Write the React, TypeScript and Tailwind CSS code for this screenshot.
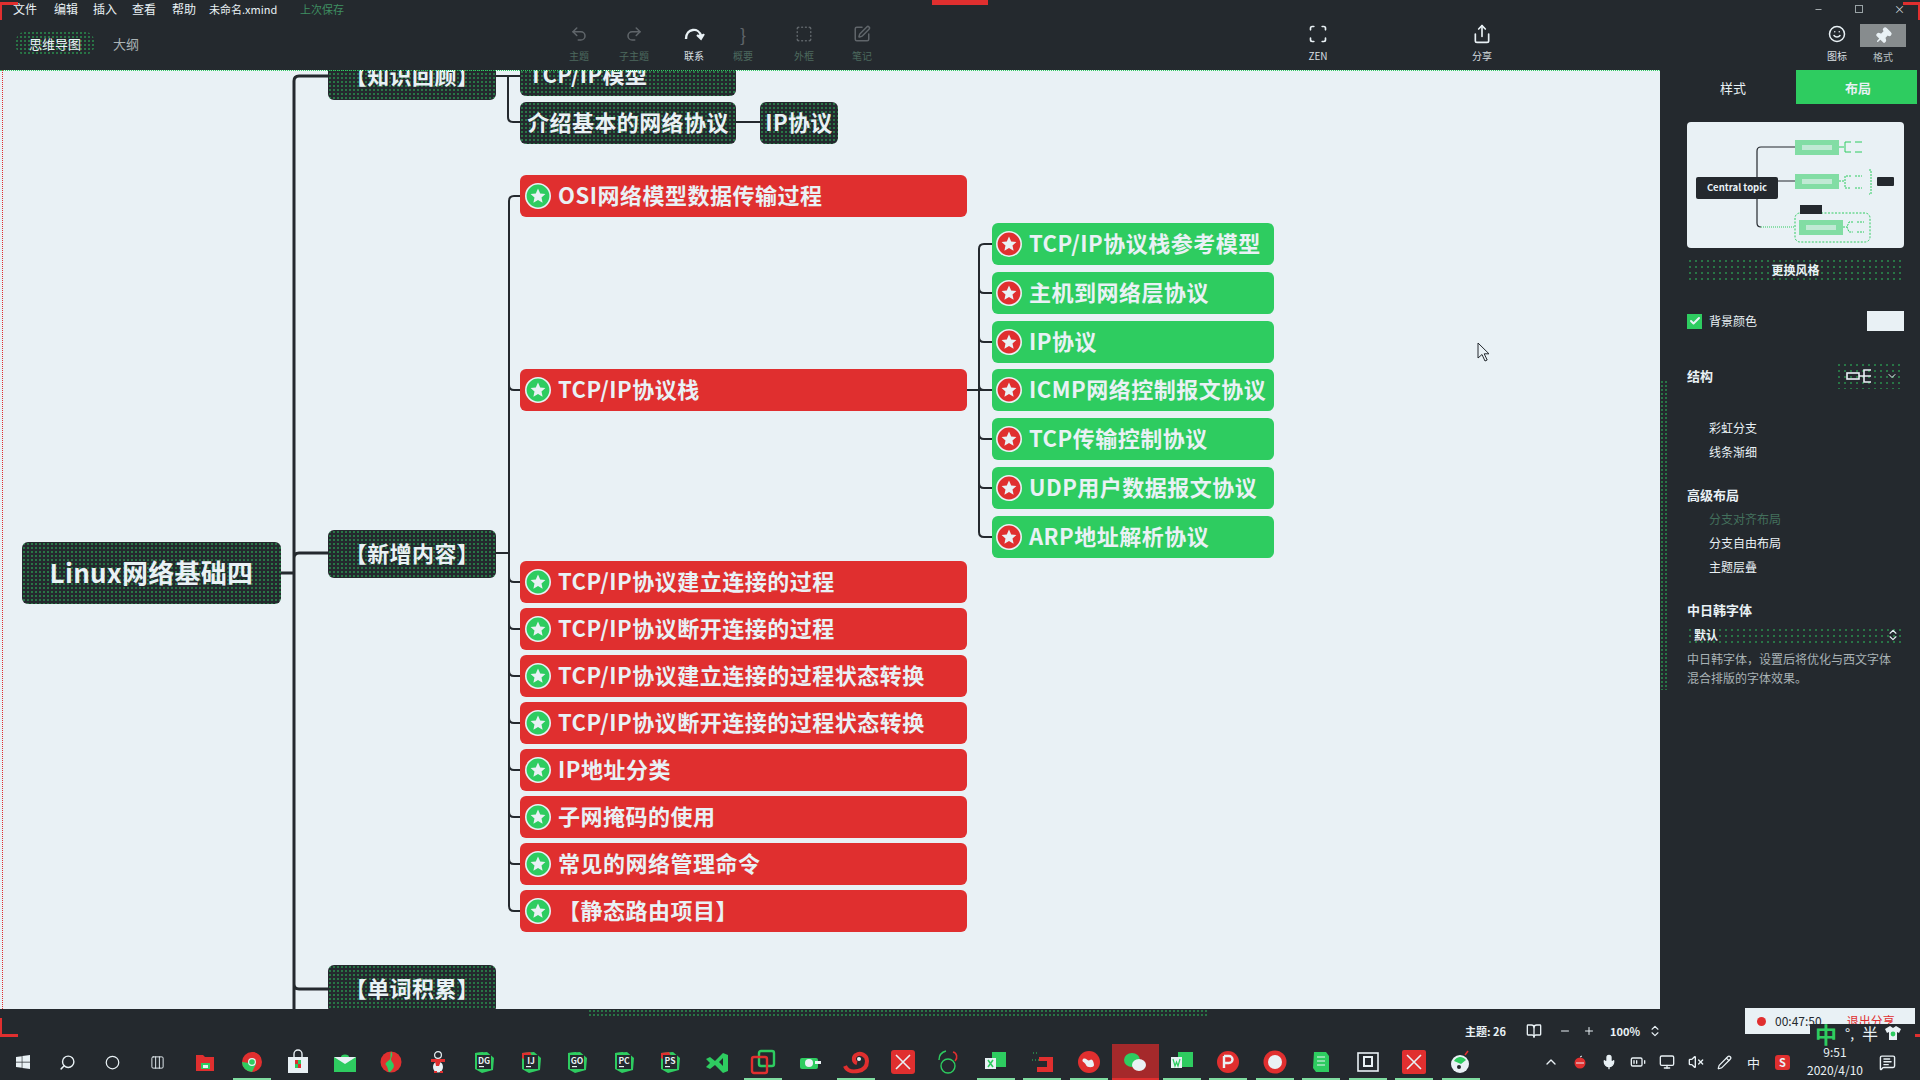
import React from "react";
import { Undo2, Redo2, Scan, Share, Smile, Pin, BookOpen, Minus, Plus, ChevronsUpDown, ChevronDown, Check, Search, Circle, Mic, BatteryMedium, Monitor, VolumeX, ChevronUp, MessageSquareText, SquareDashed, SquarePen, Pencil, Columns3 } from "lucide-react";
import { FaWindows } from "react-icons/fa";

const DOTS = "bg-[radial-gradient(circle,#2ecc60_0.6px,transparent_0.8px)] bg-[length:4px_4px]";
const FAINT_DOTS = "bg-[radial-gradient(circle,#2ecc60_0.6px,transparent_0.8px)] bg-[length:6px_6px]";

function Badge({ color }: { color: string }) {
  return (
    <svg width="26" height="26" viewBox="0 0 26 26" className="shrink-0">
      <circle cx="13" cy="13" r="12.2" fill={color} stroke="#e9f1f5" strokeWidth="1.6" />
      <path d="M13 5.6l2.2 4.8 5.2.6-3.9 3.5 1.1 5.2-4.6-2.7-4.6 2.7 1.1-5.2-3.9-3.5 5.2-.6z" fill="#e9f1f5" />
    </svg>
  );
}

const reds = [
  { t: "OSI网络模型数据传输过程", c: "top-[105px]" },
  { t: "TCP/IP协议栈", c: "top-[299px]" },
  { t: "TCP/IP协议建立连接的过程", c: "top-[491px]" },
  { t: "TCP/IP协议断开连接的过程", c: "top-[538px]" },
  { t: "TCP/IP协议建立连接的过程状态转换", c: "top-[585px]" },
  { t: "TCP/IP协议断开连接的过程状态转换", c: "top-[632px]" },
  { t: "IP地址分类", c: "top-[679px]" },
  { t: "子网掩码的使用", c: "top-[726px]" },
  { t: "常见的网络管理命令", c: "top-[773px]" },
  { t: "【静态路由项目】", c: "top-[820px]" },
];
const greens = [
  { t: "TCP/IP协议栈参考模型", c: "top-[153px]" },
  { t: "主机到网络层协议", c: "top-[202px]" },
  { t: "IP协议", c: "top-[251px]" },
  { t: "ICMP网络控制报文协议", c: "top-[299px]" },
  { t: "TCP传输控制协议", c: "top-[348px]" },
  { t: "UDP用户数据报文协议", c: "top-[397px]" },
  { t: "ARP地址解析协议", c: "top-[446px]" },
];
const darks = [
  { t: "【知识回顾】", c: "left-[328px] top-[-18px] w-[168px] h-[48px] justify-center" },
  { t: "【新增内容】", c: "left-[328px] top-[460px] w-[168px] h-[48px] justify-center" },
  { t: "【单词积累】", c: "left-[328px] top-[895px] w-[168px] h-[48px] justify-center" },
  { t: "TCP/IP模型", c: "left-[520px] top-[-16px] w-[216px] h-[42px] pl-[9px]" },
  { t: "介绍基本的网络协议", c: "left-[520px] top-[32px] w-[216px] h-[42px] justify-center" },
  { t: "IP协议", c: "left-[760px] top-[32px] w-[78px] h-[42px] justify-center" },
];

const redCenters = [320, 512, 559, 606, 653, 700, 747, 794];
const greenCenters = [223, 272, 320, 369, 418];

function Connectors() {
  return (
    <svg className="absolute left-0 top-0 w-[1660px] h-[940px]" viewBox="0 0 1660 940" fill="none" stroke="#24292e">
      <g strokeWidth="3">
        <path d="M281 503H294M328 6H299Q294 6 294 11V940M328 483H299Q294 483 294 488M294 914Q294 919 299 919H328" />
      </g>
      <g strokeWidth="2">
        <path d="M496 483H509M520 126H514Q509 126 509 131V836Q509 841 514 841H520" />
        {redCenters.map((y) => (
          <path key={y} d={`M509 ${y - 5}Q509 ${y} 514 ${y}H520`} />
        ))}
        <path d="M496 6H520M508 6V47Q508 52 513 52H520M736 52H760" />
        <path d="M967 320H992M992 174H984Q979 174 979 179V462Q979 467 984 467H992" />
        {greenCenters.map((y) => (
          <path key={y} d={`M979 ${y - 5}Q979 ${y} 984 ${y}H992`} />
        ))}
      </g>
    </svg>
  );
}

function Canvas() {
  return (
    <div className="relative w-[1660px] h-[939px] bg-[#e9f1f5] overflow-hidden">
      <Connectors />
      <div className={`absolute left-[22px] top-[472px] w-[259px] h-[62px] pb-[4px] rounded-[6px] bg-[#24292e] ${DOTS} flex items-center justify-center text-[26px] font-bold tracking-[0.3px] text-[#e9f1f5]`}>Linux网络基础四</div>
      {darks.map((d) => (
        <div key={d.t} className={`absolute ${d.c} pb-[3px] rounded-[6px] bg-[#24292e] ${DOTS} flex items-center text-[22px] font-bold tracking-[0.4px] text-[#e9f1f5] whitespace-nowrap`}>{d.t}</div>
      ))}
      {reds.map((d) => (
        <div key={d.t} className={`absolute left-[520px] ${d.c} w-[447px] h-[42px] rounded-[6px] bg-[#e02f2f] flex items-center gap-[7px] pl-[5px] text-[22px] font-bold tracking-[0.5px] text-[#e9f1f5] whitespace-nowrap`}>
          <Badge color="#2ecc60" />
          <span className="pb-[3px]">{d.t}</span>
        </div>
      ))}
      {greens.map((d) => (
        <div key={d.t} className={`absolute left-[992px] ${d.c} w-[282px] h-[42px] rounded-[6px] bg-[#2ecc60] flex items-center gap-[7px] pl-[4px] text-[22px] font-bold tracking-[0.5px] text-[#e9f1f5] whitespace-nowrap`}>
          <Badge color="#e02f2f" />
          <span className="pb-[3px]">{d.t}</span>
        </div>
      ))}
      <svg className="absolute left-[1476px] top-[272px] w-[16px] h-[22px]" viewBox="0 0 16 22">
        <path d="M2 1v15l4-3.5 3 6.5 2.2-1-3-6.2H13z" fill="#e9f1f5" stroke="#24292e" strokeWidth="1" />
      </svg>
      <div className="absolute left-[2px] top-0 h-full border-l border-dotted border-[#e02f2f]" />
      <div className="absolute left-0 top-0 w-full border-t border-dotted border-[#2ecc60]" />
    </div>
  );
}

function ArcIcon() {
  return (
    <svg width="22" height="22" viewBox="0 0 22 22" fill="none" stroke="#e9f1f5" strokeWidth="2.4">
      <path d="M3 16C3 5 16 4 18 13" />
      <path d="M14 12l4 4 3-5" strokeWidth="2" fill="#e9f1f5" />
    </svg>
  );
}

function Tool({ icon, label, className = "", dim = false }: { icon: React.ReactNode; label: string; className?: string; dim?: boolean }) {
  return (
    <div className={`w-[40px] shrink-0 flex flex-col items-center pt-[2px] ${className}`}>
      <div className={`h-[23px] flex items-center justify-center ${dim ? "opacity-30" : ""}`}>{icon}</div>
      <div className={`mt-[4px] text-[10px] leading-[14px] whitespace-nowrap ${dim ? "text-[#4d6a5e]" : "text-[#d7dfe0]"}`}>{label}</div>
    </div>
  );
}

function Header() {
  const ic = "w-[18px] h-[18px] text-[#e9f1f5]";
  return (
    <div className="h-[70px] shrink-0 bg-[#24292e] flex flex-col text-[#e9f1f5]">
      <div className="h-[20px] pb-[2px] flex items-center pl-[13px] text-[12px] leading-none">
        <span className="w-[41px]">文件</span>
        <span className="w-[39px]">编辑</span>
        <span className="w-[39px]">插入</span>
        <span className="w-[40px]">查看</span>
        <span className="w-[37px]">帮助</span>
        <span className="w-[91px] text-[11px]">未命名.xmind</span>
        <span className="text-[11px] text-[#3f8f62]">上次保存</span>
        <div className="ml-auto flex items-center text-[#cfd6d8]">
          <Minus className="w-[9px] h-[9px] mr-[32px]" />
          <span className="mr-[31px] w-[8px] h-[8px] border border-[#9aa3a6]" />
          <span className="mr-[15px] text-[11px]">×</span>
        </div>
      </div>
      <div className="h-[50px] flex items-start">
        <div className="w-[559px] shrink-0 flex items-center pl-[15px] pt-[11px]">
          <div className={`w-[80px] h-[25px] rounded-full bg-[#24292e] ${DOTS} flex items-center justify-center text-[13px]`}>思维导图</div>
          <span className="ml-[18px] text-[13px] text-[#aab3b5]">大纲</span>
        </div>
        <Tool dim icon={<Undo2 className={ic} />} label="主题" />
        <Tool dim icon={<Redo2 className={ic} />} label="子主题" className="ml-[15px]" />
        <Tool icon={<ArcIcon />} label="联系" className="ml-[20px]" />
        <Tool dim icon={<span className="text-[18px] leading-none">{"}"}</span>} label="概要" className="ml-[9px]" />
        <Tool dim icon={<SquareDashed className={ic} />} label="外框" className="ml-[21px]" />
        <Tool dim icon={<SquarePen className={ic} />} label="笔记" className="ml-[18px]" />
        <Tool icon={<Scan className="w-[20px] h-[20px] text-[#e9f1f5]" />} label="ZEN" className="ml-[416px]" />
        <Tool icon={<Share className="w-[20px] h-[20px] text-[#e9f1f5]" />} label="分享" className="ml-[124px]" />
        <Tool icon={<Smile className={ic} />} label="图标" className="ml-[315px]" />
        <div className="w-[46px] ml-[3px] shrink-0 flex flex-col items-center pt-[4px]">
          <div className="w-[46px] h-[23px] bg-[#878c8e] flex items-center justify-center">
            <Pin className="w-[18px] h-[18px] text-[#e9f1f5] fill-[#e9f1f5] rotate-45" />
          </div>
          <div className="mt-[3px] text-[10px] leading-[14px] text-[#b7c0c2]">格式</div>
        </div>
      </div>
    </div>
  );
}

function Preview() {
  return (
    <svg viewBox="0 0 217 126" className="w-[217px] h-[126px] rounded-[4px] bg-[#e9f1f5]" fill="none">
      <path d="M91 59H108M108 25H74Q70 25 70 29V101Q70 105 74 105" stroke="#24292e" strokeWidth="1.2" />
      <path d="M74 105H108" stroke="#2ecc60" strokeWidth="1.2" strokeDasharray="1 1" />
      <rect x="9" y="55" width="82" height="22" rx="2" fill="#24292e" />
      <text x="50" y="69" textAnchor="middle" fontSize="9.5" fontWeight="700" fill="#e9f1f5">Central topic</text>
      <rect x="108" y="18" width="44" height="15" fill="#2ecc60" fillOpacity="0.55" />
      <rect x="115" y="23" width="30" height="5" fill="#e9f1f5" fillOpacity="0.6" />
      <path d="M152 25H157M164 20H158V30H164M168 20h7M168 30h7" stroke="#2ecc60" />
      <rect x="108" y="52" width="44" height="15" fill="#2ecc60" fillOpacity="0.55" />
      <rect x="115" y="57" width="30" height="5" fill="#e9f1f5" fillOpacity="0.6" />
      <path d="M152 59H157M164 54H158V66H164M168 54h7M168 66h7M182 48h2V72h-2" stroke="#2ecc60" strokeDasharray="2 1" />
      <rect x="190" y="55" width="17" height="9" rx="1" fill="#24292e" />
      <rect x="108" y="91" width="75" height="29" rx="5" stroke="#2ecc60" strokeDasharray="2 1.5" />
      <rect x="113" y="83" width="22" height="9" fill="#24292e" />
      <rect x="112" y="98" width="44" height="15" fill="#2ecc60" fillOpacity="0.55" />
      <rect x="119" y="103" width="30" height="5" fill="#e9f1f5" fillOpacity="0.6" />
      <path d="M156 105h4M166 100h-4l-2 5 2 5h4M170 100h7M170 110h7" stroke="#2ecc60" strokeDasharray="2 1" />
    </svg>
  );
}

function Sidebar() {
  return (
    <div className="relative w-[260px] h-[939px] bg-[#24292e] text-[#e9f1f5] text-[12px] leading-none">
      <div className="flex h-[34px]">
        <div className="w-[136px] flex items-center justify-center pl-[10px] text-[13px]">样式</div>
        <div className="w-[121px] flex items-center justify-center pl-[3px] bg-[#2ecc60] text-[13px] font-bold">布局</div>
      </div>
      <div className="pl-[27px] pr-[16px]">
        <div className="mt-[18px]"><Preview /></div>
        <div className={`mt-[10px] h-[23px] ${FAINT_DOTS} flex items-center justify-center font-bold`}>更换风格</div>
        <div className="mt-[30px] h-[20px] flex items-center">
          <div className="w-[15px] h-[15px] bg-[#2ecc60] flex items-center justify-center">
            <Check className="w-[12px] h-[12px] text-[#e9f1f5]" strokeWidth={4} />
          </div>
          <span className="ml-[7px]">背景颜色</span>
          <div className="ml-auto w-[37px] h-[20px] bg-[#e9f1f5]" />
        </div>
        <div className="mt-[31px] h-[27px] flex items-center">
          <span className="text-[13px] font-bold">结构</span>
          <div className={`ml-auto w-[68px] h-[27px] ${FAINT_DOTS} flex items-center pl-[10px]`}>
            <svg width="26" height="16" viewBox="0 0 26 16" fill="none" stroke="#e9f1f5" strokeWidth="1.6">
              <rect x="1" y="5" width="12" height="6" />
              <path d="M13 8H18M25 2H18V14H25M18 8H25" />
            </svg>
            <ChevronDown className="ml-[14px] w-[12px] h-[12px]" />
          </div>
        </div>
        <div className="mt-[27px] pl-[22px]">
          <div className="h-[24px] flex items-center">彩虹分支</div>
          <div className="h-[24px] flex items-center">线条渐细</div>
        </div>
        <div className="mt-[20px] h-[20px] flex items-center text-[13px] font-bold">高级布局</div>
        <div className="mt-[3px] pl-[22px]">
          <div className="h-[24px] flex items-center text-[#43705c]">分支对齐布局</div>
          <div className="h-[24px] flex items-center">分支自由布局</div>
          <div className="h-[24px] flex items-center">主题层叠</div>
        </div>
        <div className="mt-[20px] h-[20px] flex items-center text-[13px] font-bold">中日韩字体</div>
        <div className={`mt-[8px] h-[16px] ${FAINT_DOTS} flex items-center justify-between pl-[7px] pr-[4px]`}>
          <span className="font-bold">默认</span>
          <ChevronsUpDown className="w-[14px] h-[14px]" />
        </div>
        <div className="mt-[6px] leading-[19px] text-[#a9b3b6] whitespace-nowrap">
          中日韩字体，设置后将优化与西文字体
          <br />
          混合排版的字体效果。
        </div>
      </div>
      <div className={`absolute left-0 top-[310px] w-[9px] h-[310px] ${DOTS}`} />
    </div>
  );
}

function StatusBar() {
  return (
    <div className="relative h-[35px] shrink-0 bg-[#24292e] flex text-[#e9f1f5]">
      <div className={`ml-[588px] w-[619px] h-[9px] ${DOTS}`} />
      <div className="ml-[258px] flex items-center h-[35px] pt-[9px] text-[11px] leading-none">
        <span className="w-[61px] whitespace-nowrap font-bold">主题: 26</span>
        <BookOpen className="w-[16px] h-[16px]" />
        <Minus className="ml-[17px] w-[12px] h-[12px]" />
        <Plus className="ml-[12px] w-[12px] h-[12px]" />
        <span className="ml-[15px] w-[38px] font-bold">100%</span>
        <ChevronsUpDown className="w-[14px] h-[14px]" />
      </div>
      <div className="absolute left-[1745px] top-[-1px] w-[170px] h-[26px] bg-[#e9f1f5] flex items-center text-[#24292e] text-[12px] leading-none">
        <span className="ml-[12px] w-[9px] h-[9px] rounded-full bg-[#e02f2f]" />
        <span className="ml-[9px] whitespace-nowrap">00:47:50</span>
        <span className="ml-[25px] text-[#e02f2f] whitespace-nowrap">退出分享</span>
      </div>
      <div className="absolute left-[1810px] top-[15px] w-[105px] h-[17px] bg-[#24292e] flex items-center leading-none">
        <span className="ml-[5px] text-[22px] text-[#2ecc60] font-bold">中</span>
        <span className="ml-[8px] text-[14px]">°,</span>
        <span className="ml-[8px] text-[16px]">半</span>
        <svg className="ml-[6px]" width="18" height="16" viewBox="0 0 18 16"><path d="M1 4l5-3 3 2 3-2 5 3-2 4-2-1v8H5V7L3 8z" fill="#e9f1f5" /><circle cx="9" cy="9" r="2.4" fill="#2ecc60" /></svg>
      </div>
    </div>
  );
}

const R = "#e02f2f";
const G = "#2ecc60";
const W = "#e9f1f5";
const D = "#24292e";

function IdeIcon({ label, c1, c2 }: { label: string; c1: string; c2: string }) {
  return (
    <svg width="24" height="24" viewBox="0 0 24 24">
      <path d="M3 3l12-1 7 6-1 12-11 3-7-4z" fill={c1} />
      <path d="M3 3l8-1 2 4-7 4-3-2z" fill={c2} />
      <rect x="5" y="5" width="14" height="14" fill={D} />
      <text x="12" y="13.5" textAnchor="middle" fontSize="8.5" fontWeight="700" fill={W}>{label}</text>
      <rect x="7" y="16" width="5" height="1.2" fill={W} />
    </svg>
  );
}

function Box({ children }: { children: React.ReactNode }) {
  return <svg width="26" height="26" viewBox="0 0 26 26">{children}</svg>;
}

const apps: { icon: React.ReactNode; on?: boolean; active?: boolean }[] = [
  { icon: <Box><path d="M4 6h7l2 2h9v14H4z" fill={R} /><rect x="9" y="14" width="9" height="6" fill={G} /><rect x="11" y="16" width="5" height="3" fill={W} /></Box> },
  { on: true, icon: <Box><circle cx="13" cy="13" r="10" fill={R} /><path d="M3 13a10 10 0 0 0 10 10l4-8z" fill={G} /><path d="M13 3a10 10 0 0 1 9 6h-9z" fill={R} /><circle cx="13" cy="13" r="4" fill={W} /><circle cx="13" cy="13" r="2.8" fill={G} /></Box> },
  { icon: <Box><rect x="3" y="8" width="20" height="16" fill={W} /><path d="M9 8V5a4 4 0 0 1 8 0v3" fill="none" stroke={W} strokeWidth="1.4" /><rect x="10" y="11" width="3" height="4" fill={R} /><rect x="13" y="11" width="3" height="4" fill={G} /><rect x="10" y="15" width="3" height="4" fill={G} /><rect x="13" y="15" width="3" height="4" fill={R} /></Box> },
  { icon: <Box><path d="M2 8h22v15H2z" fill={G} /><path d="M2 8h22l-11 7z" fill={W} /><path d="M9 8a4 2.5 0 0 1 8 0z" fill={G} /></Box> },
  { icon: <Box><circle cx="13" cy="13" r="10.5" fill={R} /><path d="M13 2.5c3 3 0 6 0 8s5 5 2 9-3 3.5-4 3.5-1-5-3-7 3-4 4-6 0-5 1-7.500z" fill={G} /></Box> },
  { icon: <Box><circle cx="13" cy="6" r="3.4" fill="none" stroke={W} strokeWidth="1.2" /><rect x="6" y="10" width="14" height="3" fill={R} /><ellipse cx="13" cy="18" rx="5" ry="5.5" fill={W} /><path d="M10 12h6l-2 5h-3z" fill={R} /><rect x="9" y="22" width="3" height="2" fill={R} /><rect x="15" y="22" width="3" height="2" fill={R} /></Box> },
  { icon: <IdeIcon label="DG" c1={G} c2={G} /> },
  { icon: <IdeIcon label="IJ" c1={G} c2={R} /> },
  { icon: <IdeIcon label="GO" c1={G} c2={G} /> },
  { icon: <IdeIcon label="PC" c1={G} c2={G} /> },
  { icon: <IdeIcon label="PS" c1={G} c2={R} /> },
  { icon: <Box><path d="M2 10l4-2 5 4 8-8 5 2v16l-5 2-8-8-5 4-4-2 4-4z" fill={G} /><path d="M19 9l-4 4 4 4z" fill={D} /></Box> },
  { on: true, icon: <Box><rect x="9" y="2" width="15" height="15" rx="2" fill="none" stroke={G} strokeWidth="2.4" /><rect x="2" y="8" width="15" height="16" rx="2" fill="none" stroke={R} strokeWidth="2.4" /></Box> },
  { icon: <Box><rect x="3" y="9" width="18" height="11" rx="2" fill={G} /><circle cx="12" cy="14" r="4" fill={W} /><rect x="18" y="12" width="6" height="3" fill={W} /></Box> },
  { on: true, icon: <Box><path d="M2 17c2 5 8 6 13 5 6-1 9-5 9-10 0-6-7-9-11-6-3 2-3 7 1 8" fill="none" stroke={R} strokeWidth="4" /><circle cx="16" cy="10" r="2" fill={W} /></Box> },
  { icon: <Box><rect x="1" y="1" width="24" height="24" rx="3" fill={R} /><path d="M6 6l14 14M20 6L6 20" stroke={W} strokeWidth="1.6" /></Box> },
  { icon: <Box><circle cx="12" cy="17" r="7" fill="none" stroke={G} strokeWidth="1.4" /><path d="M10 2c-4 1-7 4-7 9" fill="none" stroke={G} strokeWidth="1.4" /><path d="M17 3c4 1 5 6 2 9" fill="none" stroke={R} strokeWidth="1.6" /></Box> },
  { on: true, icon: <Box><rect x="9" y="3" width="14" height="15" fill={G} /><rect x="2" y="9" width="11" height="11" fill={W} /><path d="M5 11l5 7M10 11l-5 7" stroke={G} strokeWidth="1.6" /></Box> },
  { on: true, icon: <Box><path d="M10 8h14v15H8v-5h10v-6h-8z" fill={R} /><path d="M4 4h6M3 11h7" stroke={G} strokeDasharray="1 2" /></Box> },
  { on: true, icon: <Box><circle cx="13" cy="13" r="11" fill={R} /><path d="M7 10c3-2 5 3 7 1s4 2 4 5-7 3-8 0-5-3-3-6z" fill={W} /></Box> },
  { active: true, icon: <Box><ellipse cx="10" cy="11" rx="8" ry="7" fill={G} /><ellipse cx="17" cy="16" rx="7" ry="6" fill={W} /></Box> },
  { on: true, icon: <Box><rect x="9" y="3" width="15" height="15" fill={G} /><rect x="2" y="8" width="11" height="11" fill={W} /><path d="M4 10l2 7 1.500-4 1.500 4 2-7" fill="none" stroke={G} strokeWidth="1.2" /></Box> },
  { on: true, icon: <Box><circle cx="13" cy="13" r="11" fill={R} /><path d="M9 7v12M9 7h5a3.500 3.500 0 0 1 0 7H9" fill="none" stroke={W} strokeWidth="2.4" /></Box> },
  { on: true, icon: <Box><circle cx="13" cy="13" r="11.500" fill={R} /><circle cx="13" cy="13" r="7" fill={W} /></Box> },
  { on: true, icon: <Box><path d="M6 3h12l3 4v16H8l-3-4z" fill={G} /><path d="M9 8h8M9 12h8M9 16h8" stroke={W} strokeWidth="1.2" /></Box> },
  { on: true, icon: <Box><rect x="3" y="4" width="20" height="18" fill="none" stroke={W} strokeWidth="1.6" /><rect x="9" y="8" width="8" height="9" fill="none" stroke={W} strokeWidth="2" /></Box> },
  { on: true, icon: <Box><rect x="1" y="1" width="24" height="24" rx="2" fill={R} /><path d="M6 6l14 14M20 6L6 20" stroke={W} strokeWidth="1.6" /></Box> },
  { on: true, icon: <Box><circle cx="12" cy="15" r="9" fill={W} /><path d="M6 12a7 7 0 0 1 12-1l-5 4z" fill={G} /><circle cx="11" cy="18" r="2" fill={D} /><path d="M17 6l3-4" stroke={R} strokeWidth="1.6" /></Box> },
];

function Taskbar() {
  const sys = "w-[45px] h-full flex items-center justify-center";
  const tray = "w-[29px] h-full flex items-center justify-center";
  return (
    <div className="h-[36px] shrink-0 bg-[#24292e] flex text-[#e9f1f5]">
      <div className={sys}><FaWindows className="w-[16px] h-[16px]" /></div>
      <div className={sys}><Search className="w-[17px] h-[17px] -scale-x-100" /></div>
      <div className={sys}><Circle className="w-[15px] h-[15px]" strokeWidth={2} /></div>
      <div className={sys}><Columns3 className="w-[15px] h-[15px]" strokeWidth={1.5} /></div>
      <div className="ml-[2px] flex">
        {apps.map((a, i) => (
          <div key={i} className={`relative w-[46.5px] h-full flex items-center justify-center ${a.active ? "bg-[#a5292b]" : ""}`}>
            {a.icon}
            {a.on && <span className="absolute bottom-0 left-[4px] w-[38px] h-[2px] bg-[#7fdca0]" />}
            {a.active && <span className="absolute bottom-0 left-0 w-full h-[2px] bg-[#e02f2f]" />}
          </div>
        ))}
      </div>
      <div className="ml-[52px] flex">
        <div className={tray}><ChevronUp className="w-[16px] h-[16px]" /></div>
        <div className={tray}><svg width="14" height="14" viewBox="0 0 14 14"><circle cx="7" cy="8" r="5.500" fill="#e02f2f" /><path d="M3 8h8" stroke="#e9f1f5" /><path d="M7 2l2-1" stroke="#e9f1f5" /></svg></div>
        <div className={tray}><Mic className="w-[16px] h-[16px] fill-[#e9f1f5]" /></div>
        <div className={tray}><BatteryMedium className="w-[16px] h-[16px]" /></div>
        <div className={tray}><Monitor className="w-[16px] h-[16px]" /></div>
        <div className={tray}><VolumeX className="w-[16px] h-[16px]" /></div>
        <div className={tray}><Pencil className="w-[15px] h-[15px]" /></div>
        <div className={tray}><span className="text-[13px] leading-none">中</span></div>
        <div className={tray}><span className="w-[15px] h-[15px] rounded-[3px] bg-[#e02f2f] text-[11px] leading-[15px] text-center font-bold">S</span></div>
      </div>
      <div className="w-[76px] h-full flex flex-col items-center justify-center text-[12px] leading-[18px] -mt-[1px]">
        <span>9:51</span>
        <span>2020/4/10</span>
      </div>
      <div className="w-[28px] h-full flex items-center justify-center">
        <MessageSquareText className="w-[17px] h-[17px]" />
      </div>
    </div>
  );
}

export default function App() {
  return (
    <div className="relative w-[1920px] h-[1080px] overflow-hidden bg-[#24292e] flex flex-col [font-family:'Noto_Sans_CJK_SC','Noto_Sans',sans-serif]">
      <Header />
      <div className="flex h-[939px] shrink-0">
        <Canvas />
        <Sidebar />
      </div>
      <StatusBar />
      <Taskbar />
      <div className="absolute left-0 top-[2px] w-[18px] h-[3px] bg-[#e02f2f]" />
      <div className="absolute left-0 top-[2px] w-[2px] h-[18px] bg-[#e02f2f]" />
      <div className="absolute right-0 top-[2px] w-[17px] h-[3px] bg-[#e02f2f]" />
      <div className="absolute right-0 top-[2px] w-[2px] h-[18px] bg-[#e02f2f]" />
      <div className="absolute left-[932px] top-0 w-[56px] h-[5px] bg-[#e02f2f]" />
      <div className="absolute left-0 top-[1018px] w-[2px] h-[19px] bg-[#e02f2f]" />
      <div className="absolute left-0 top-[1034px] w-[18px] h-[3px] bg-[#e02f2f]" />
      <div className="absolute right-0 top-[1034px] w-[5px] h-[3px] bg-[#e02f2f]" />
    </div>
  );
}
